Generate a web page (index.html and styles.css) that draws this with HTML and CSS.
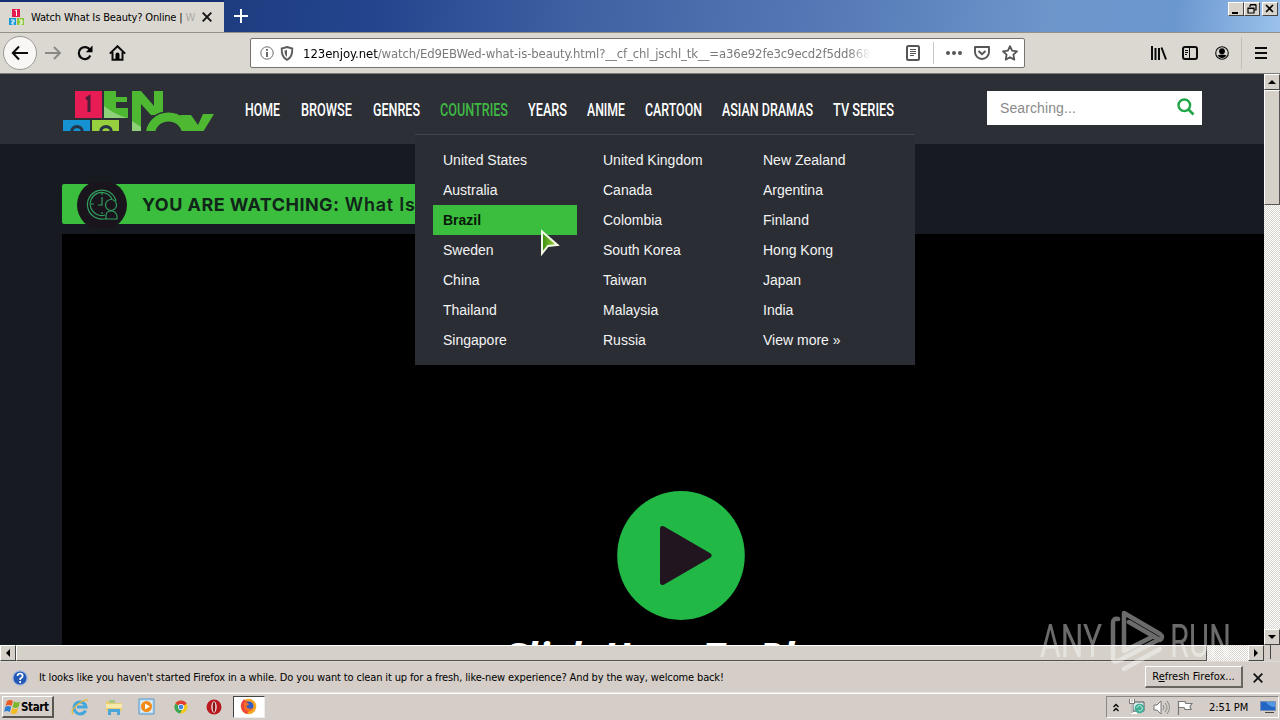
FILE: index.html
```html
<!DOCTYPE html>
<html lang="en">
<head>
<meta charset="utf-8">
<title>Watch What Is Beauty? Online</title>
<link rel="stylesheet" href="styles.css">
</head>
<body>
<div class="desktop">
  <header class="titlebar">
    <div class="tab">
      <svg class="favicon" width="16" height="17" viewBox="0 0 16 17"><path fill="#e51b4f" d="M3 0h8v8H3z"/><path fill="#1b98d7" d="M0 9h7v7H0z"/><path fill="#8cc63f" d="M8 9h7v7H8z"/><path d="M6 2l1.500-1v6M2 11h3v2H3v2h2M10 11h3v4h-3M11 13h2" fill="none" stroke="#fff"/></svg>
      <span class="tab-title">Watch What Is Beauty? Online | <span class="tab-fade">W</span></span>
      <svg class="tab-close" width="10" height="10" viewBox="0 0 10 10"><path d="M.7.7l8.600 8.600M9.300.7L.7 9.300" stroke="#111" stroke-width="1.900"/></svg>
    </div>
    <div class="titlefill">
      <svg class="newtab" width="14" height="14" viewBox="0 0 14 14"><path d="M7 0v14M0 7h14" stroke="#fff" stroke-width="2"/></svg>
      <div class="winbtns">
        <span class="wb"><svg width="14" height="12"><path d="M3 9h6v2H3z"/></svg></span><span class="wb"><svg width="14" height="12"><path d="M5 2h6v5H9M5 2v2M5 1.500h6M3 5h6v5H3zM3 5.500h6" fill="none" stroke="#000" stroke-width="1.200"/></svg></span><span class="wb gap"><svg width="14" height="12"><path d="M3 2l7 7M10 2l-7 7" stroke="#000" stroke-width="1.600"/></svg></span>
      </div>
    </div>
  </header>

  <nav class="toolbar">
    <div class="navbtns">
      <span class="back"><svg width="18" height="16" viewBox="0 0 18 16"><path d="M17 8H2M8 1.500L1.800 8 8 14.500" fill="none" stroke="#0c0c0d" stroke-width="2"/></svg></span>
      <svg width="17" height="16" viewBox="0 0 17 16"><path d="M0 8h15M9 2l6 6-6 6" fill="none" stroke="#8a8883" stroke-width="1.900"/></svg>
      <svg class="reload" width="16" height="16" viewBox="0 0 16 16"><path d="M13 5A6 6 0 1 0 13.300 10.500" fill="none" stroke="#0c0c0d" stroke-width="2.200"/><path d="M15.500.5v6.700H8.800z"/></svg>
      <svg class="home" width="17" height="16" viewBox="0 0 17 16"><path d="M.8 8.600L8.500 1.200l7.700 7.400M3.500 7v7.700h10V7" fill="none" stroke="#0c0c0d" stroke-width="2"/><path d="M6.500 9.500a2 2 0 0 1 4 0V15h-4z"/></svg>
    </div>
    <div class="urlbar">
      <svg class="info" width="14" height="14" viewBox="0 0 14 14"><circle cx="7" cy="7" r="6.200" fill="none" stroke="#6b6b6b"/><path d="M6 3h2v1.800H6zM6 6h2v5H6z" fill="#6b6b6b"/></svg>
      <svg class="shield" width="14" height="15" viewBox="0 0 14 15"><path d="M7 1l5.300 1.500C12.500 8 11 12 7 13.800 3 12 1.500 8 1.700 2.500z" fill="none" stroke="#5c5c5c" stroke-width="1.900"/><path d="M7 4v7C5 9.500 4.500 7 4.500 4.500z" fill="#5c5c5c"/></svg>
      <span class="url"><b>123enjoy.net</b>/watch/Ed9EBWed-what-is-beauty.html?__cf_chl_jschl_tk__=a36e92fe3c9ecd2f5dd868</span>
      <svg class="reader" width="14" height="16" viewBox="0 0 14 16"><rect x="1" y="1" width="12" height="14" rx="1.500" fill="none" stroke="#555" stroke-width="2"/><path d="M4 4.500h6M4 6.500h6M4 8.500h6M4 10.500h4" stroke="#555"/></svg>
      <span class="urlsep"></span>
      <svg class="dots" width="16" height="4"><circle cx="2" cy="2" r="2"/><circle cx="8" cy="2" r="2"/><circle cx="14" cy="2" r="2"/></svg>
      <svg class="pocket" width="16" height="15" viewBox="0 0 16 15"><path d="M1 1h14v5a7 7 0 0 1-14 0z" fill="none" stroke="#555" stroke-width="1.900" stroke-linejoin="round"/><path d="M4.500 5L8 8.300 11.500 5" fill="none" stroke="#555" stroke-width="1.900"/></svg>
      <svg class="star" width="16" height="16" viewBox="0 0 16 16"><path d="M8 1.200l2.100 4.500 4.900.6-3.600 3.400.9 4.900L8 12.200l-4.300 2.400.9-4.900L1 6.300l4.900-.6z" fill="none" stroke="#555" stroke-width="1.800" stroke-linejoin="round"/></svg>
    </div>
    <div class="tools">
      <svg class="library" width="16" height="14" viewBox="0 0 16 14"><path d="M1 0v14M4.500 2v12M8 2v12M10.500 1.500L15 13.500" fill="none" stroke="#0c0c0d" stroke-width="2"/></svg>
      <svg class="sidebar" width="16" height="14" viewBox="0 0 16 14"><rect x="1" y="1" width="14" height="12" rx="2" fill="none" stroke="#0c0c0d" stroke-width="2"/><path d="M7.500 1v12M3 4.500h3M3 6.500h3M3 8.500h2" stroke="#0c0c0d"/></svg>
      <svg class="account" width="14" height="14" viewBox="0 0 14 14"><circle cx="7" cy="7" r="6.300" fill="none" stroke="#0c0c0d" stroke-width="1.100"/><circle cx="7" cy="5.200" r="2.900"/><path d="M2.500 9.500Q7 7.500 11.500 9.500 9.500 12 7 12T2.500 9.500"/></svg>
      <span class="toolsep"></span>
      <svg class="burger" width="12" height="12"><path d="M0 1h12M0 6h12M0 11h12" stroke="#0c0c0d" stroke-width="2"/></svg>
    </div>
  </nav>

  <div class="viewport">
    <div class="page">
      <div class="site-header">
        <svg class="logo" width="152" height="40" viewBox="0 0 152 40">
          <path fill="#e81c55" d="M13 0h27v27H13z"/><path fill="#1492d2" d="M1 29h27v12H1z"/><path fill="#97cf3e" d="M30 29h27v12H30z"/>
          <path fill="#4fb833" d="M42 0h12v6h11v5H54v6h12v10H42z"/><path fill="#8ed178" d="M42 15q10 8 23 12H42z"/>
          <path fill="#4fb833" d="M70 0h9l13 15V0h9v24H89L79 13v28h-9z"/><path fill="#8ed178" d="M70 30l9 6v5h-9z"/>
          <path d="M88.500 43a18 17 0 0 1 36 0" fill="none" stroke="#2c2f36" stroke-width="12"/>
          <path d="M88.500 43a18 17 0 0 1 36 0" fill="none" stroke="#4fb833" stroke-width="9"/>
          <path fill="#4fb833" d="M118 24h11l7 10 5-11h11l-11 18h-14z"/>
          <path d="M24 8l3-2v15" fill="none" stroke="#4a1f38" stroke-width="3"/><path d="M10 42q-1-6 5-6.500 6 .5 5 6.500M39 42q-1-6 5-6.500 6 .5 5 6.500" fill="none" stroke="#253448" stroke-width="3"/>
        </svg>
        <div class="mainnav">
          <svg class="ni" width="36" height="20"><text y="17" textLength="35" lengthAdjust="spacingAndGlyphs">HOME</text></svg>
          <svg class="ni" width="52" height="20"><text y="17" textLength="51" lengthAdjust="spacingAndGlyphs">BROWSE</text></svg>
          <svg class="ni" width="47" height="20"><text y="17" textLength="47" lengthAdjust="spacingAndGlyphs">GENRES</text></svg>
          <svg class="ni on" width="68" height="20"><text y="17" textLength="68" lengthAdjust="spacingAndGlyphs">COUNTRIES</text></svg>
          <svg class="ni" width="39" height="20"><text y="17" textLength="39" lengthAdjust="spacingAndGlyphs">YEARS</text></svg>
          <svg class="ni" width="38" height="20"><text y="17" textLength="38" lengthAdjust="spacingAndGlyphs">ANIME</text></svg>
          <svg class="ni" width="57" height="20"><text y="17" textLength="57" lengthAdjust="spacingAndGlyphs">CARTOON</text></svg>
          <svg class="ni" width="91" height="20"><text y="17" textLength="91" lengthAdjust="spacingAndGlyphs">ASIAN DRAMAS</text></svg>
          <svg class="ni" width="62" height="20"><text y="17" textLength="61" lengthAdjust="spacingAndGlyphs">TV SERIES</text></svg>
        </div>
        <div class="search"><span>Searching...</span><svg width="18" height="18" viewBox="0 0 18 18"><circle cx="7.300" cy="7.300" r="5.800" fill="none" stroke="#22a648" stroke-width="2.400"/><path d="M11.500 11.500l5 5" stroke="#22a648" stroke-width="2.600"/></svg></div>
      </div>
      <div class="content">
        <div class="banner">
          <svg class="clock" width="50" height="46" viewBox="0 2 50 46"><circle cx="25" cy="25" r="25" fill="#1a151d"/><g fill="none" stroke="#2f9d5c" stroke-width="1.200"><path d="M29 38.500A14.500 14.500 0 1 1 39 21"/><path d="M28 35a11.500 11.500 0 1 1 7-16"/><path d="M25 12v3M14 24h3M25 17v8h-4M25 32v2"/><circle cx="34" cy="25" r="5.500" fill="#1a151d"/><path d="M29 39v-3q0-5 5-5t6 5v3z" fill="#1a151d"/></g></svg>
          <span class="banner-text"><b>YOU ARE WATCHING:</b> What Is</span>
        </div>
        <div class="video">
          <svg class="play" width="128" height="130" viewBox="0 0 128 130"><ellipse cx="64" cy="64.500" rx="63.800" ry="64.500" fill="#22b845"/><path d="M45.500 37.500l46.500 27-46.500 27z" fill="#21151f" stroke="#21151f" stroke-width="5" stroke-linejoin="round"/></svg>
          <div class="click">Click Here To Play</div>
        </div>
      </div>
      <div class="menu">
        <div class="col"><a>United States</a><a>Australia</a><a class="hot">Brazil</a><a>Sweden</a><a>China</a><a>Thailand</a><a>Singapore</a></div>
        <div class="col"><a>United Kingdom</a><a>Canada</a><a>Colombia</a><a>South Korea</a><a>Taiwan</a><a>Malaysia</a><a>Russia</a></div>
        <div class="col"><a>New Zealand</a><a>Argentina</a><a>Finland</a><a>Hong Kong</a><a>Japan</a><a>India</a><a>View more »</a></div>
      </div>
      <svg class="cursor" width="20" height="28" viewBox="0 0 20 28"><defs><linearGradient id="cg"><stop offset="0" stop-color="#388c12"/><stop offset="1" stop-color="#a9d93d"/></linearGradient></defs><path d="M2 2.500v22l6-7.500 9.500-1z" fill="url(#cg)" stroke="#f3f8e8" stroke-width="2"/></svg>
    </div>
    <div class="vscroll"><span class="sb"><svg width="8" height="4"><path d="M0 4l4-4 4 4z"/></svg></span><span class="vthumb"></span><span class="fill"></span><span class="sb"><svg width="8" height="4"><path d="M0 0h8L4 4z"/></svg></span></div>
  </div>
  <div class="hscroll"><span class="sb"><svg width="4" height="8"><path d="M4 0v8L0 4z"/></svg></span><span class="hthumb"></span><span class="fill"></span><span class="sb"><svg width="4" height="8"><path d="M0 0l4 4-4 4z"/></svg></span><span class="corner"></span></div>

  <div class="notice">
    <svg class="q" width="16" height="16" viewBox="0 0 16 16"><circle cx="8" cy="8" r="7.200" fill="#2358b5" stroke="#a9bddd" stroke-width="1.300"/><path d="M5.500 6q.2-2.500 2.600-2.500T10.700 6Q10.700 7.200 8.200 8.700V10M8.200 11v2" fill="none" stroke="#fff" stroke-width="1.700"/></svg>
    <span class="notice-text">It looks like you haven't started Firefox in a while. Do you want to clean it up for a fresh, like-new experience? And by the way, welcome back!</span>
    <span class="refresh"><span>R<u>e</u>fresh Firefox...</span></span>
    <svg class="nclose" width="10" height="10"><path d="M.7.7l8.600 8.600M9.300.7L.7 9.300" stroke="#111" stroke-width="1.800"/></svg>
  </div>

  <footer class="taskbar">
    <span class="start"><svg width="17" height="16" viewBox="0 0 17 16"><path d="M3 2q3-2 6 0L7.500 7q-3-2-6 0z" fill="#ea5a24"/><path d="M10 2.500q3 2 6 0L14.500 8q-3 2-6 0z" fill="#7cb72e"/><path d="M1.200 8q3-2 6 0L5.700 13q-3-2-5.500 0z" fill="#2a7fd0"/><path d="M8.200 9q3 2 6 0l-1.500 5q-3 2-6 0z" fill="#f5b921"/></svg><b>Start</b></span>
    <div class="quick">
      <svg width="18" height="18" viewBox="0 0 18 18"><path d="M14.500 12.500A6 6 0 1 1 15 9H6" fill="none" stroke="#43a6dc" stroke-width="3"/><path d="M2 16Q-1 13 6 7T17 2" fill="none" stroke="#e5b83a" stroke-width="1.300"/></svg>
      <svg width="18" height="18" viewBox="0 0 18 18"><path d="M1 3h6l1 2h9v8H1z" fill="#e9cd74"/><path d="M4 2h6v3H4z" fill="#a9c98b"/><path d="M1 6h16v4H1z" fill="#f8e9a8"/><path d="M3 17v-6h12v6h-3v-3H6v3z" fill="#4ca6da"/></svg>
      <svg width="18" height="18" viewBox="0 0 18 18"><path d="M1 1h15v15H1z" fill="#bfe0f5" stroke="#5598cb"/><path d="M3 3h11v11H3z" fill="#e4eff5"/><circle cx="8.500" cy="8.500" r="5.500" fill="#f38a16"/><path d="M7 5.500l5 3-5 3z" fill="#fff"/></svg>
      <svg width="18" height="18" viewBox="0 0 18 18"><circle cx="9" cy="9" r="6.500" fill="#f3c91f"/><path d="M9 9L3.400 5.700A6.500 6.500 0 0 1 14.600 5.700z" fill="#de3e34"/><path d="M9 9L3.400 5.700A6.500 6.500 0 0 0 8 15.500L11 10z" fill="#3ba456"/><circle cx="9" cy="9" r="3" fill="#fff"/><circle cx="9" cy="9" r="2.300" fill="#4285e2"/></svg>
      <svg width="18" height="18" viewBox="0 0 18 18"><circle cx="9" cy="9" r="7.500" fill="#b8181e"/><ellipse cx="9" cy="9" rx="2.700" ry="5.800" fill="#f1e6e4"/><ellipse cx="9" cy="9" rx="1.300" ry="5" fill="#8c1015"/></svg>
      <span class="fx"><svg width="17" height="17" viewBox="0 0 17 17"><circle cx="8.500" cy="8.500" r="7.800" fill="#f6a623"/><path d="M1 7q1-4 3-6 1 3 4 2L11 9l-4 7Q1 14 1 7z" fill="#ee3f42"/><circle cx="9" cy="8" r="4.500" fill="#355cc5"/><path d="M4 4q4 0 5 3l-3 1q2 4 7 2-2 5-7 3Q3 11 4 4z" fill="#f36d25"/></svg></span>
    </div>
    <div class="tray">
      <svg class="chev" width="6" height="9"><path d="M.5 4L3 1.500 5.500 4M.5 8L3 5.500 5.500 8" fill="none" stroke="#000" stroke-width="1.300"/></svg>
      <svg class="net" width="16" height="16" viewBox="0 0 16 16"><path d="M4 3h11v9H4z" fill="#d9efe9" stroke="#556"/><path d="M1 0v4h4V0M3 4v10h5" fill="none" stroke="#fff" stroke-width="2"/><path d="M.5 0v4.500h5V0M3 5v9" fill="none" stroke="#555" stroke-width=".8"/><circle cx="10.500" cy="9.500" r="4.800" fill="#3fae94"/><path d="M7.500 9q3-5 6 0-2 5-4 2" fill="none" stroke="#c5eee1"/></svg>
      <svg class="vol" width="17" height="15" viewBox="0 0 17 15"><path d="M1 5h3l4-4v13l-4-4H1z" fill="#fff" stroke="#777"/><path d="M10 5q2 2.500 0 5M12 3q4 4.500 0 9M14 1q5 6.500 0 13" fill="none" stroke="#888"/></svg>
      <svg class="flag" width="16" height="15" viewBox="0 0 16 15"><path d="M1.500 1v14M2 1.500h6l1 2h6l-2 3 1 3H8l-1-2H2" fill="#fff" stroke="#777" stroke-width="1.200"/></svg>
      <span class="time">2:51 PM</span>
      <svg class="desk" width="16" height="13" viewBox="0 0 16 13"><path d="M.5.5h15v9H.5z" fill="#2466c5" stroke="#7791b5"/><path d="M6 1h9v5Q9 6 6 1z" fill="#5398e5"/><path d="M5 11h9v1H5z" fill="#444"/></svg>
    </div>
  </footer>
  <svg class="watermark" width="196" height="64" viewBox="0 0 196 64">
    <g class="wm-text"><text x="1" y="48" textLength="62" lengthAdjust="spacingAndGlyphs">ANY</text><text x="131" y="48" textLength="61" lengthAdjust="spacingAndGlyphs">RUN</text></g>
    <g fill="none" stroke="#fff" stroke-width="4.500" stroke-linejoin="round" stroke-linecap="round"><path d="M74 49V14q0-5 5-4M85 42V4l36 21q4 3 0 6L90 13M85 42L113 28M74 49q0 5 5 3l40-21M85 60l36-20"/></g>
  </svg>
</div>
</body>
</html>
```
FILE: styles.css
```css
* { box-sizing: border-box; }
body { margin: 0; overflow: hidden; font-family: "DejaVu Sans Condensed", "DejaVu Sans", sans-serif; font-stretch: condensed; font-size: 11px; color: #000; }
svg { display: block; flex: none; }
.desktop { position: relative; width: 1280px; height: 720px; display: flex; flex-direction: column; background: #d5cec8; overflow: hidden; white-space: nowrap; }

.titlebar { height: 32px; flex: none; display: flex; }
.tab { width: 224px; border-top: 2px solid #132e72; background: #dbd8d1; display: flex; align-items: center; padding-left: 9px; }
.tab-title { margin-left: 6px; width: 165px; overflow: hidden; letter-spacing: -.15px; }
.tab-fade { color: #aaa8a4; }
.tab-close { margin-left: 6px; }
.titlefill { flex: 1; display: flex; justify-content: space-between; background: linear-gradient(96deg, #1e3c80 0%, #24468e 15%, #3f60a2 33%, #5a7fba 62%, #6e96cb 78%, #6b97cf 90%, #9bc2ec 100%); padding: 9px 2px 0 10px; }
.winbtns { display: flex; margin-top: -7px; }
.wb { width: 16px; height: 14px; background: #d8d4cc; border: 1px solid #fff; border-right-color: #444; border-bottom-color: #444; }
.wb.gap { margin-left: 2px; }

.toolbar { height: 42px; flex: none; display: flex; align-items: center; background: #dbd8d1; border-top: 1px solid #929087; border-bottom: 1px solid #7f7d79; }
.navbtns { width: 250px; display: flex; align-items: center; padding-left: 3px; }
.back { width: 34px; height: 34px; border-radius: 50%; border: 1px solid #9c9a96; background: #f8f7f6; display: flex; align-items: center; justify-content: center; margin-right: 8px; }
.reload { margin-left: 15px; }
.home { margin-left: 16px; }
.urlbar { width: 775px; height: 30px; background: #fff; border: 1px solid #77746f; border-radius: 2px; display: flex; align-items: center; padding-left: 9px; }
.shield { margin-left: 6px; }
.url { font-size: 13px; letter-spacing: -.12px; margin-left: 9px; width: 568px; overflow: hidden; color: #7a7a7a; -webkit-mask-image: linear-gradient(90deg, #000 96%, transparent); mask-image: linear-gradient(90deg, #000 96%, transparent); }
.url b { font-weight: 400; color: #000; letter-spacing: -.05px; }
.reader { margin-left: 35px; }
.urlsep { width: 1px; height: 22px; background: #c8c8c8; margin-left: 13px; }
.dots { margin-left: 12px; fill: #555; }
.pocket { margin-left: 12px; }
.star { margin-left: 12px; }
.tools { flex: 1; display: flex; align-items: center; padding-left: 126px; }
.sidebar { margin-left: 15px; }
.account { margin-left: 17px; }
.toolsep { width: 1px; height: 32px; background: #c4c1bb; margin-left: 12px; }
.burger { margin-left: 13px; }

.viewport { height: 571px; flex: none; display: flex; }
.page { position: relative; width: 1264px; height: 571px; overflow: hidden; background: #171a21; }
.site-header { height: 70px; background: #2c2f36; display: flex; padding: 17px 0 0 62px; }
.mainnav { display: flex; gap: 20.050px; margin: 8px 0 0 31px; width: 742px; flex: none; }
.ni { overflow: visible; }
.ni text { font: 500 19px Roboto, sans-serif; fill: #fff; }
.ni.on text { fill: #3fb944; }
.search { width: 215px; height: 34px; background: #fff; display: flex; justify-content: space-between; padding: 7px 7px 0 13px; font: 14px/20px "Liberation Sans", sans-serif; letter-spacing: .1px; color: #8a8a8a; }
.content { padding: 40px 0 0 62px; }
.banner { width: 800px; height: 40px; background: #3bbe3d; border-radius: 2px; display: flex; align-items: center; padding-left: 15px; }
.clock { margin-bottom: -1px; }
.banner-text { margin-left: 15px; font: 600 18px Inter, sans-serif; color: #11241a; letter-spacing: .75px; }
.banner-text b { font-weight: 700; letter-spacing: .45px; }
.video { height: 421px; margin-top: 10px; background: #000; padding-top: 257px; }
.play { margin-left: 555px; }
.click { margin: 5px 0 0 439px; font: italic 700 40px/60px "Open Sans", sans-serif; letter-spacing: .1px; color: #fff; }
.menu { position: absolute; left: 415px; top: 60px; width: 500px; height: 231px; background: #2a2d34; border-top: 1px solid #41444a; display: flex; gap: 16px; padding: 10px 0 0 18px; }
.col { width: 144px; }
.col a { display: block; height: 30px; padding-left: 10px; font: 14px/31px "Liberation Sans", sans-serif; color: #f3f3f3; }
.col a.hot { background: #3bbe3d; color: #081808; font-weight: 700; }
.cursor { position: absolute; left: 540px; top: 155px; }

.sb { width: 16px; height: 16px; flex: none; background: #d5d1c8; border: 1px solid #fff; border-right-color: #444; border-bottom-color: #444; display: flex; align-items: center; justify-content: center; }
.vscroll { width: 16px; display: flex; flex-direction: column; }
.vthumb { height: 115px; background: #d5d1c8; border: 1px solid #fff; border-right-color: #555; border-bottom-color: #555; }
.fill { flex: 1; background: repeating-conic-gradient(#fff 0 25%, #d9d5ce 0 50%) 0 0 / 2px 2px; }
.hscroll { height: 16px; flex: none; display: flex; }
.hthumb { width: 1191px; height: 16px; background: #d5d1c8; border: 1px solid #fff; border-right-color: #555; border-bottom-color: #55504a; }
.hscroll .fill { height: 16px; }
.corner { width: 16px; height: 14px; border-right: 9px solid #d5cec8; box-shadow: inset -1px 0 #444; }

.notice { height: 32px; flex: none; display: flex; align-items: center; padding-left: 12px; border-top: 1px solid #dedad4; }
.notice-text { margin-left: 11px; width: 1106px; letter-spacing: -.14px; }
.refresh { width: 98px; height: 22px; margin-top: -2px; line-height: 19px; text-align: center; border: 1px solid #fff; border-right: 2px solid #69655f; border-bottom: 2px solid #69655f; font-size: 11px; }
.nclose { margin-left: 10px; }
.taskbar { height: 27px; flex: none; display: flex; border-top: 1px solid #fff; box-shadow: 0 -1px #e8e4e0; }
.start { width: 52px; height: 22px; margin: 2px 0 0 2px; display: flex; align-items: center; border: 1px solid #fff; border-right: 2px solid #5a5650; border-bottom: 2px solid #5a5650; padding-left: 1px; font-size: 11.500px; }
.start b { letter-spacing: -.35px; }
.quick { display: flex; align-items: center; gap: 15.500px; margin-left: 17px; width: 1052px; height: 25px; }
.fx { width: 32px; height: 22px; margin-left: -6px; background: #fff; border: 1px solid #444; border-right-color: #eee; border-bottom-color: #eee; display: flex; align-items: center; justify-content: center; }
.tray { flex: none; margin: 2px 0 0 -17px; width: 173px; height: 22px; display: flex; align-items: center; border: 1px solid #8c8883; border-right-color: #fff; border-bottom-color: #fff; padding-left: 6px; }
.net { margin-left: 10px; }
.vol { margin-left: 8px; }
.flag { margin-left: 7px; }
.time { margin-left: 16px; width: 41px; letter-spacing: -.1px; }
.desk { margin-left: 10px; }
.watermark { position: absolute; left: 1039px; top: 609px; opacity: .42; }
.wm-text text { font: 400 47px Roboto, sans-serif; fill: #fff; }
```
